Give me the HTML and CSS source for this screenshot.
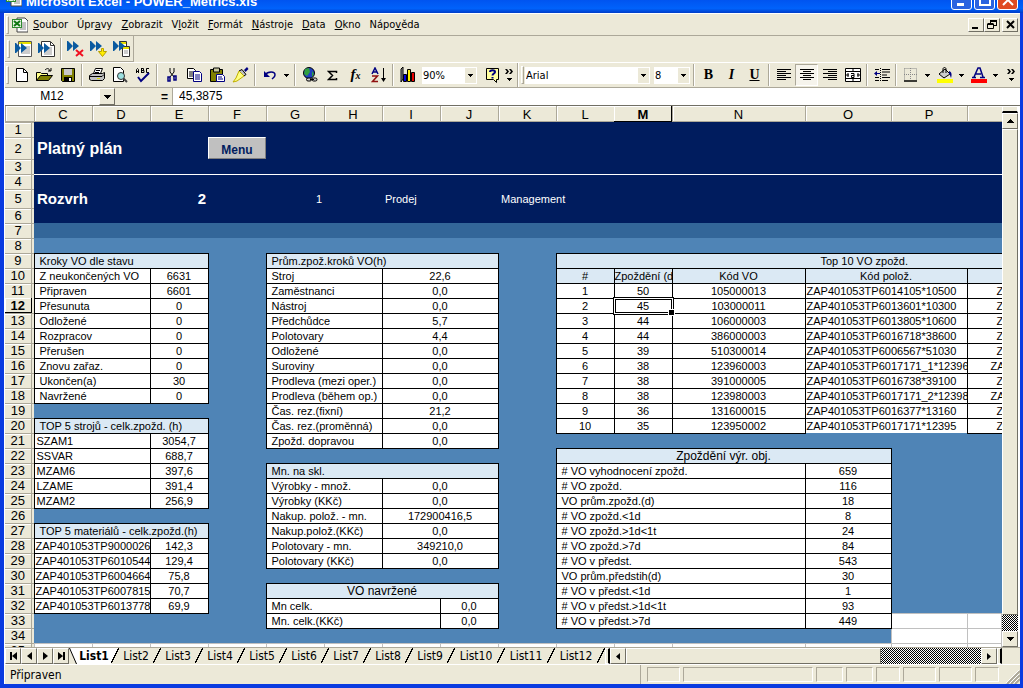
FILE: index.html
```html
<!DOCTYPE html>
<html lang="cs">
<head>
<meta charset="utf-8">
<title>Microsoft Excel - POWER_Metrics.xls</title>
<link rel="stylesheet" href="styles.css">
</head>
<body>
<svg class="defs" width="0" height="0" aria-hidden="true">
  <symbol id="ff" viewBox="0 0 12 10"><path d="M1 0v10l5-5v5l6-5-6-5v5z" fill="#0a5aa0"/><path d="M0 0h1v10H0z" fill="#0a5aa0"/></symbol>
  <symbol id="down" viewBox="0 0 5 3"><path d="M0 0h5v1H0zM1 1h3v1H1zM2 2h1v1H2z"/></symbol>
  <symbol id="slash" viewBox="0 0 8 16"><path d="M7 0h1v2H7v2H6v2H5v2H4v2H3v2H2v2H1v1H0v-2h1v-2h1V9h1V7h1V5h1V3h1V1h1z"/></symbol>
  <symbol id="more" viewBox="0 0 9 12"><path d="M0 0h2l2 2.500-2 2.500H0l2-2.500zM4 0h2l2 2.500-2 2.500H4l2-2.500zM2 9h5v1H2zM3 10h3v1H3zM4 11h1v1H4z"/></symbol>
  <symbol id="excel" viewBox="0 0 16 16"><path d="M5 1h8l3 3v11H5z" fill="#fff" stroke="#444"/><path d="M10 6h4M10 8h4M10 10h4M8 12h6" stroke="#888"/><path d="M0 2h10v9H0z" fill="#2e8b2e"/><path d="M1 3h8v7H1z" fill="#e8f4e4"/><path d="M2 4l6 5M8 4l-6 5" stroke="#117711" stroke-width="2"/></symbol>
</svg>

<header class="titlebar">
  <svg class="app-icon" width="16" height="16"><use href="#excel"/></svg>
  <h1 class="title">Microsoft Excel - POWER_Metrics.xls</h1>
  <div class="caption-buttons">
    <button class="cap" aria-label="Minimalizovat"><svg width="20" height="20"><path d="M5 13h7v3H5z" fill="#fff"/></svg></button>
    <button class="cap" aria-label="Maximalizovat"><svg width="20" height="20"><path d="M5 5h10v10H5z" fill="none" stroke="#fff" stroke-width="2"/></svg></button>
    <button class="cap cap-close" aria-label="Zavřít"><svg width="20" height="20"><path d="M5 5l10 10M15 5L5 15" stroke="#fff" stroke-width="2"/></svg></button>
  </div>
</header>

<main class="client">
  <nav class="menubar">
    <span class="grip"></span>
    <svg class="doc-icon" width="16" height="16"><use href="#excel"/></svg>
    <button><u>S</u>oubor</button><button>Úpr<u>a</u>vy</button><button><u>Z</u>obrazit</button><button>V<u>l</u>ožit</button><button><u>F</u>ormát</button><button><u>N</u>ástroje</button><button><u>D</u>ata</button><button><u>O</u>kno</button><button>Nápo<u>v</u>ěda</button>
    <div class="mdi">
      <button aria-label="Minimalizovat sešit"><svg width="11" height="9"><path d="M1 7h6v2H1z"/></svg></button>
      <button aria-label="Obnovit sešit"><svg width="11" height="9"><path d="M3 .500h7M3 1.500h7M9.500 1v5M3.500 1v2M.500 3.500h6M.500 4.500h6M.500 4v4.500h6V4M7 5.500h3" fill="none" stroke="#000"/></svg></button>
      <button aria-label="Zavřít sešit"><svg width="11" height="9"><path d="M2 1l7 7M9 1L2 8" stroke="#000" stroke-width="2"/></svg></button>
    </div>
  </nav>

  <div class="toolbar custom">
    <div class="custom-group">
      <span class="grip"></span>
      <button class="tool" aria-label="List zpět"><svg width="17" height="16"><path d="M3.500.500h13v15h-13z" fill="#fff" stroke="#555"/><path d="M4 1h12v2H4z" fill="#e8e000"/><path d="M6 6h9M6 8h9M6 10h9M6 12h9" stroke="#999"/><use href="#ff" width="12" height="10" y="2"/></svg></button>
      <button class="tool" aria-label="List vpřed"><svg width="17" height="16"><path d="M3.500.500h9l4 4v11h-13z" fill="#fff" stroke="#333"/><path d="M12.500 1v3.500h4" fill="none" stroke="#333"/><path d="M6 7h8M6 9h8M6 11h8M6 13h8" stroke="#999"/><use href="#ff" width="12" height="10" y="2"/></svg></button>
      <span class="sep"></span>
      <button class="tool" aria-label="Odebrat"><svg width="17" height="16"><use href="#ff" width="12" height="10"/><path d="M9 9l7 6M16 9l-7 6" stroke="#f01020" stroke-width="2"/></svg></button>
      <button class="tool" aria-label="Uložit dolů"><svg width="17" height="16"><use href="#ff" width="12" height="10"/><path d="M11.500 7.500v3h-3l4 5 4-5h-3v-3z" fill="#ffee00" stroke="#b8a000"/></svg></button>
      <button class="tool" aria-label="Kopírovat listy"><svg width="17" height="16"><path d="M6.500.500h7v7h-7z" fill="#fff" stroke="#333"/><path d="M7 1h6v2H7z" fill="#e8e000"/><path d="M9.500 5.500h7v10h-7z" fill="#fff" stroke="#333"/><path d="M10 6h6v2h-6z" fill="#e8e000"/><path d="M11 10h4M11 12h4" stroke="#999"/><use href="#ff" width="12" height="10"/></svg></button>
    </div>
  </div>

  <div class="toolbar">
    <span class="grip"></span>
    <button class="tool" aria-label="Nový"><svg width="16" height="16"><path d="M2.500 1.500h7l4 4v9h-11z" fill="#fff" stroke="#000"/><path d="M9.500 2v3.500h4" fill="none" stroke="#000"/></svg></button>
    <button class="tool" aria-label="Otevřít"><svg width="17" height="16"><path d="M.500 13.500v-8h4l1 1h6v3" fill="#ff8" stroke="#000"/><path d="M.500 13.500l4-5h12l-4 5z" fill="#808000" stroke="#000"/><path d="M9 3c2-2 4-2 5 1M12 4h3V1" fill="none" stroke="#000"/></svg></button>
    <button class="tool" aria-label="Uložit"><svg width="16" height="16"><path d="M1.500 1.500h13v13h-12l-1-1z" fill="#808000" stroke="#000"/><path d="M4 2h8v6H4z" fill="#c8c8c8"/><path d="M4 10h8v4H4z"/><path d="M9 11h2v3H9z" fill="#fff"/></svg></button>
    <span class="sep"></span>
    <button class="tool" aria-label="Tisk"><svg width="16" height="16"><path d="M4.500 6.500l2-5h7l-2 5z" fill="#fff" stroke="#000"/><path d="M7 3.500h4M6 5.500h4" stroke="#000"/><path d="M.500 8.500l3-2h10l2-1v6l-2 2h-11l-2-1z" fill="#c0c0c0" stroke="#000"/><path d="M1 9.500h12l2-2M3 13.500h9" stroke="#000" fill="none"/><path d="M8 11h3v1H8z" fill="#dd0"/></svg></button>
    <button class="tool" aria-label="Náhled"><svg width="16" height="16"><path d="M1.500.500h7l3 3v11h-10z" fill="#fff" stroke="#000"/><circle cx="9" cy="9" r="3.500" fill="#9ce0e0" stroke="#333"/><path d="M11.500 11.500l3.500 3.500" stroke="#444" stroke-width="2"/></svg></button>
    <button class="tool" aria-label="Pravopis"><svg width="16" height="16"><path d="M1.500 6V2.500l1-1 1 1V6M1 4.500h3M6.500 1v4.500M6 1.500h2.500v2H6.500h2.500v2H6M14 1.500h-2.500v4H14" fill="none" stroke="#000"/><path d="M3 10l3 4 8-8" fill="none" stroke="#000080" stroke-width="2"/></svg></button>
    <span class="sep"></span>
    <button class="tool" aria-label="Vyjmout"><svg width="16" height="16"><path d="M6 1v4l4 5M10 1v4l-4 5" fill="none" stroke="#000"/><path d="M4 10h2v4H4zM10 9h2v4h-2z" fill="none" stroke="#000080" stroke-width="1.500"/></svg></button>
    <button class="tool" aria-label="Kopírovat"><svg width="17" height="16"><path d="M1.500 1.500h6l2 2v8h-8z" fill="#fff" stroke="#000"/><path d="M3 5h4M3 7h4M3 9h4" stroke="#000"/><path d="M7.500 4.500h6l2 2v8h-8z" fill="#fff" stroke="#000080"/><path d="M9 8h5M9 10h5M9 12h5" stroke="#000080"/></svg></button>
    <button class="tool" aria-label="Vložit"><svg width="17" height="16"><path d="M1.500 2.500h12v12h-12z" fill="#808000" stroke="#000"/><path d="M4.500 1h6v4h-6z" fill="#c8c8a0" stroke="#000"/><path d="M7.500 7.500h6l2 2v5h-8z" fill="#fff" stroke="#000080"/><path d="M9 10h4M9 12h5" stroke="#000080"/></svg></button>
    <button class="tool" aria-label="Kopírovat formát"><svg width="17" height="16"><path d="M12 3l3-3 1.500 2-3 3z" fill="#000080"/><path d="M7 4l3-1.500 4 5L12 9z" fill="#c0c0c0" stroke="#000"/><path d="M7 4l5 5-7 5-4 1 3-4z" fill="#ffff80" stroke="#c0b000"/></svg></button>
    <span class="sep"></span>
    <button class="tool" aria-label="Zpět"><svg width="16" height="16"><path d="M3 8c3-4 10-4 10 0 0 2-2 3-3 4" fill="none" stroke="#000080" stroke-width="1.500"/><path d="M2 4v6h6z" fill="#000080"/></svg></button>
    <button class="drop" aria-label="Zpět - možnosti"><svg width="5" height="3"><use href="#down"/></svg></button>
    <span class="sep"></span>
    <button class="tool" aria-label="Hypertextový odkaz"><svg width="16" height="16"><circle cx="7" cy="6" r="5.500" fill="#2040c0" stroke="#000"/><path d="M3 2l4-1 1 4-3 4-3-2zM10 4l2 3-2 3z" fill="#30a040"/><rect x="4.500" y="11" width="5" height="3" rx="1.500" fill="#ccc" stroke="#000"/><rect x="10" y="11" width="5" height="3" rx="1.500" fill="#ccc" stroke="#000"/><path d="M8 12.500h4" stroke="#000"/></svg></button>
    <button class="tool" aria-label="Automatické shrnutí"><svg width="11" height="11"><path d="M9.500 3V1.500h-8l4 4-4 4h8V8" fill="none" stroke="#000" stroke-width="1.500"/></svg></button>
    <button class="tool fx" aria-label="Vložit funkci">f<small>x</small></button>
    <button class="tool" aria-label="Seřadit vzestupně"><svg width="16" height="16"><path d="M1 7l3-6 3 6M2 5h4" fill="none" stroke="#000080" stroke-width="1.500"/><path d="M1 9h5.500L1.500 14.500H7" fill="none" stroke="#901010" stroke-width="1.500"/><path d="M12 1h1v10h2l-2.500 4L10 11h2z"/></svg></button>
    <span class="sep"></span>
    <button class="tool" aria-label="Průvodce grafem"><svg width="16" height="16"><path d="M1 2l2-2v12l-2 3z" fill="#999" stroke="#000"/><path d="M3.500 7.500h3v7h-3z" fill="#0000e0" stroke="#000"/><path d="M7.500 2.500h3v12h-3z" fill="#ffee00" stroke="#000"/><path d="M11.500 5.500h3v9h-3z" fill="#e80000" stroke="#000"/></svg></button>
    <span class="combo combo-zoom"><select aria-label="Lupa"><option>90%</option></select><svg width="5" height="3"><use href="#down"/></svg></span>
    <button class="tool" aria-label="Nápověda"><svg width="16" height="16"><path d="M2.500 1.500h12v11h-2v3l-3-3h-7z" fill="#ffffa0" stroke="#000"/><path d="M6 5c0-2.500 5-2.500 5 0 0 1.500-2.500 1.500-2.500 3.500M8.500 10v1.500" fill="none" stroke="#000080" stroke-width="2"/></svg></button>
    <button class="drop more" aria-label="Další tlačítka"><svg width="9" height="12"><use href="#more"/></svg></button>
    <span class="edge"></span>
    <span class="grip"></span>
    <span class="combo combo-font"><select aria-label="Písmo"><option>Arial</option></select><svg width="5" height="3"><use href="#down"/></svg></span>
    <span class="combo combo-size"><select aria-label="Velikost písma"><option>8</option></select><svg width="5" height="3"><use href="#down"/></svg></span>
    <span class="sep"></span>
    <button class="tool letter"><b>B</b></button>
    <button class="tool letter"><i>I</i></button>
    <button class="tool letter"><u>U</u></button>
    <span class="sep"></span>
    <button class="tool" aria-label="Zarovnat vlevo"><svg width="14" height="12"><path d="M0 .500h14M0 2.500h9M0 4.500h14M0 6.500h9M0 8.500h14M0 10.500h9" stroke="#000"/></svg></button>
    <button class="tool pressed" aria-label="Na střed"><svg width="14" height="12"><path d="M0 .500h14M3 2.500h8M0 4.500h14M3 6.500h8M0 8.500h14M3 10.500h8" stroke="#000"/></svg></button>
    <button class="tool" aria-label="Zarovnat vpravo"><svg width="14" height="12"><path d="M0 .500h14M5 2.500h9M0 4.500h14M5 6.500h9M0 8.500h14M5 10.500h9" stroke="#000"/></svg></button>
    <button class="tool" aria-label="Sloučit a zarovnat"><svg width="16" height="16"><path d="M.500 1.500h15v13H.500zM0 4.500h16M0 11.500h16M8 1v3M8 12v3" fill="#fff" stroke="#000"/><path d="M1 8h3M3 6v4M12 8h3M13 6v4M6 6.500h3v4H6.500v-2H9" fill="none" stroke="#000"/></svg></button>
    <span class="sep"></span>
    <button class="tool" aria-label="Zmenšit odsazení"><svg width="16" height="14"><path d="M1 1.500h4M8 1.500h8M8 4h8M8 7h5M1 9.500h4M8 9.500h8M1 12.500h4M8 12.500h6" stroke="#000"/><path d="M6.500 0v14" stroke="#000" stroke-dasharray="1 1"/><path d="M0 5.500L3 3v5zM3 5h3v1H3z" fill="#000080"/></svg></button>
    <span class="sep"></span>
    <button class="tool" aria-label="Ohraničení"><svg width="14" height="14"><path d="M.500.500h12v12M.500.500v12M6.500 0v12M0 6.500h13" fill="none" stroke="#888" stroke-dasharray="1 1"/><path d="M0 13h13" stroke="#000" stroke-width="1.500"/></svg></button>
    <button class="drop" aria-label="Ohraničení - možnosti"><svg width="5" height="3"><use href="#down"/></svg></button>
    <button class="tool" aria-label="Barva výplně"><svg width="16" height="16"><path d="M2 7l6-5 5 5-6 4z" fill="#ccc" stroke="#000"/><path d="M6 6V2c0-2 3-2 3 0v4" fill="none" stroke="#000"/><path d="M12 4c3 1 3 4 2 7-1-2-1-4-2-4z" fill="#000080"/><path d="M0 12h16v4H0z" fill="#ff0"/></svg></button>
    <button class="drop" aria-label="Barva výplně - možnosti"><svg width="5" height="3"><use href="#down"/></svg></button>
    <button class="tool" aria-label="Barva písma"><svg width="16" height="16"><path d="M3 10l4-9h2l3 9M5 7h5M1 10.500h4M9 10.500h5" fill="none" stroke="#000080" stroke-width="1.500"/><path d="M0 12h16v4H0z" fill="#f00"/></svg></button>
    <button class="drop" aria-label="Barva písma - možnosti"><svg width="5" height="3"><use href="#down"/></svg></button>
    <button class="drop more last" aria-label="Další formáty"><svg width="9" height="12"><use href="#more"/></svg></button>
  </div>

  <div class="formula">
    <input class="name-box" aria-label="Pole názvů" value="M12">
    <button class="name-drop" aria-label="Seznam názvů"><svg width="7" height="4"><path d="M0 0h7v1H0zM1 1h5v1H1zM2 2h3v1H2zM3 3h1v1H3z"/></svg></button>
    <button class="equals">=</button>
    <input class="entry" aria-label="Řádek vzorců" value="45,3875">
  </div>

  <div class="sheet">
    <div class="viewport">
      <table class="grid">
        <colgroup><col class="w-head"><col class="w"><col class="w"><col class="w"><col class="w"><col class="w"><col class="w"><col class="w"><col class="w"><col class="w"><col class="w"><col class="w"><col class="w-n"><col class="w-o"><col class="w-p"><col></colgroup>
        <thead><tr><th></th><th>C</th><th>D</th><th>E</th><th>F</th><th>G</th><th>H</th><th>I</th><th>J</th><th>K</th><th>L</th><th class="on">M</th><th>N</th><th>O</th><th>P</th><th></th></tr></thead>
        <tbody>
          <tr class="navy"><th>1</th><td colspan="15"></td></tr>
          <tr class="navy tall"><th>2</th><td colspan="3" class="plan">Platný plán</td><td class="menu-cell"><button class="menu-button">Menu</button></td><td colspan="11"></td></tr>
          <tr class="navy"><th>3</th><td colspan="15"></td></tr>
          <tr class="navy rule"><th>4</th><td colspan="15"></td></tr>
          <tr class="navy mid"><th>5</th><td colspan="2" class="sched">Rozvrh</td><td class="sched end">2</td><td></td><td class="end">1</td><td></td><td colspan="2">Prodej</td><td colspan="2">Management</td><td colspan="5"></td></tr>
          <tr class="navy"><th>6</th><td colspan="15"></td></tr>
          <tr class="steel"><th>7</th><td colspan="15"></td></tr>
          <tr><th>8</th><td colspan="15"></td></tr>
          <tr><th>9</th><td colspan="3" class="h">Kroky VO dle stavu</td><td></td><td colspan="4" class="h">Prům.zpož.kroků VO(h)</td><td></td><td colspan="6" class="h top10">Top 10 VO zpožd.</td></tr>
          <tr><th>10</th><td colspan="2" class="l">Z neukončených VO</td><td class="v">6631</td><td></td><td colspan="2" class="l">Stroj</td><td colspan="2" class="v">22,6</td><td></td><td class="h c">#</td><td class="h cut">Zpoždění (d</td><td class="h c">Kód VO</td><td colspan="2" class="h c">Kód polož.</td><td class="h last-head"></td></tr>
          <tr><th>11</th><td colspan="2" class="l">Připraven</td><td class="v">6601</td><td></td><td colspan="2" class="l">Zaměstnanci</td><td colspan="2" class="v">0,0</td><td></td><td class="v">1</td><td class="v">50</td><td class="v">105000013</td><td colspan="2" class="k">ZAP401053TP6014105*10500</td><td class="q">Z</td></tr>
          <tr><th class="on">12</th><td colspan="2" class="l">Přesunuta</td><td class="v">0</td><td></td><td colspan="2" class="l">Nástroj</td><td colspan="2" class="v">0,0</td><td></td><td class="v">2</td><td class="v active">45</td><td class="v">103000011</td><td colspan="2" class="k">ZAP401053TP6013601*10300</td><td class="q">Z</td></tr>
          <tr><th>13</th><td colspan="2" class="l">Odložené</td><td class="v">0</td><td></td><td colspan="2" class="l">Předchůdce</td><td colspan="2" class="v">5,7</td><td></td><td class="v">3</td><td class="v">44</td><td class="v">106000003</td><td colspan="2" class="k">ZAP401053TP6013805*10600</td><td class="q">Z</td></tr>
          <tr><th>14</th><td colspan="2" class="l">Rozpracov</td><td class="v">0</td><td></td><td colspan="2" class="l">Polotovary</td><td colspan="2" class="v">4,4</td><td></td><td class="v">4</td><td class="v">44</td><td class="v">386000003</td><td colspan="2" class="k">ZAP401053TP6016718*38600</td><td class="q">Z</td></tr>
          <tr><th>15</th><td colspan="2" class="l">Přerušen</td><td class="v">0</td><td></td><td colspan="2" class="l">Odložené</td><td colspan="2" class="v">0,0</td><td></td><td class="v">5</td><td class="v">39</td><td class="v">510300014</td><td colspan="2" class="k">ZAP401053TP6006567*51030</td><td class="q">Z</td></tr>
          <tr><th>16</th><td colspan="2" class="l">Znovu zařaz.</td><td class="v">0</td><td></td><td colspan="2" class="l">Suroviny</td><td colspan="2" class="v">0,0</td><td></td><td class="v">6</td><td class="v">38</td><td class="v">123960003</td><td colspan="2" class="k">ZAP401053TP6017171_1*12396</td><td class="q q-long">ZA</td></tr>
          <tr><th>17</th><td colspan="2" class="l">Ukončen(a)</td><td class="v">30</td><td></td><td colspan="2" class="l">Prodleva (mezi oper.)</td><td colspan="2" class="v">0,0</td><td></td><td class="v">7</td><td class="v">38</td><td class="v">391000005</td><td colspan="2" class="k">ZAP401053TP6016738*39100</td><td class="q">Z</td></tr>
          <tr><th>18</th><td colspan="2" class="l">Navržené</td><td class="v">0</td><td></td><td colspan="2" class="l">Prodleva (během op.)</td><td colspan="2" class="v">0,0</td><td></td><td class="v">8</td><td class="v">38</td><td class="v">123980003</td><td colspan="2" class="k">ZAP401053TP6017171_2*12398</td><td class="q q-long">ZA</td></tr>
          <tr><th>19</th><td colspan="4"></td><td colspan="2" class="l">Čas. rez.(fixní)</td><td colspan="2" class="v">21,2</td><td></td><td class="v">9</td><td class="v">36</td><td class="v">131600015</td><td colspan="2" class="k">ZAP401053TP6016377*13160</td><td class="q">Z</td></tr>
          <tr><th>20</th><td colspan="3" class="h">TOP 5 strojů - celk.zpožd. (h)</td><td></td><td colspan="2" class="l">Čas. rez.(proměnná)</td><td colspan="2" class="v">0,0</td><td></td><td class="v">10</td><td class="v">35</td><td class="v">123950002</td><td colspan="2" class="k open">ZAP401053TP6017171*12395</td><td class="q">Z</td></tr>
          <tr><th>21</th><td colspan="2" class="k name">SZAM1</td><td class="v">3054,7</td><td></td><td colspan="2" class="l">Zpožd. dopravou</td><td colspan="2" class="v">0,0</td><td colspan="7"></td></tr>
          <tr><th>22</th><td colspan="2" class="k name">SSVAR</td><td class="v">688,7</td><td colspan="6"></td><td colspan="4" class="h big">Zpoždění výr. obj.</td><td colspan="2"></td></tr>
          <tr><th>23</th><td colspan="2" class="k name">MZAM6</td><td class="v">397,6</td><td></td><td colspan="4" class="h">Mn. na skl.</td><td></td><td colspan="3" class="l"># VO vyhodnocení zpožd.</td><td class="v">659</td><td colspan="2"></td></tr>
          <tr><th>24</th><td colspan="2" class="k name">LZAME</td><td class="v">391,4</td><td></td><td colspan="2" class="l">Výrobky - množ.</td><td colspan="2" class="v">0,0</td><td></td><td colspan="3" class="l"># VO zpožd.</td><td class="v">116</td><td colspan="2"></td></tr>
          <tr><th>25</th><td colspan="2" class="k name">MZAM2</td><td class="v">256,9</td><td></td><td colspan="2" class="l">Výrobky (KKč)</td><td colspan="2" class="v">0,0</td><td></td><td colspan="3" class="l">VO prům.zpožd.(d)</td><td class="v">18</td><td colspan="2"></td></tr>
          <tr><th>26</th><td colspan="4"></td><td colspan="2" class="l">Nakup. polož. - mn.</td><td colspan="2" class="v">172900416,5</td><td></td><td colspan="3" class="l"># VO zpožd.&lt;1d</td><td class="v">8</td><td colspan="2"></td></tr>
          <tr><th>27</th><td colspan="3" class="h">TOP 5 materiálů - celk.zpožd.(h)</td><td></td><td colspan="2" class="l">Nakup.polož.(KKč)</td><td colspan="2" class="v">0,0</td><td></td><td colspan="3" class="l"># VO zpožd.&gt;1d&lt;1t</td><td class="v">24</td><td colspan="2"></td></tr>
          <tr><th>28</th><td colspan="2" class="k">ZAP401053TP9000026*</td><td class="v">142,3</td><td></td><td colspan="2" class="l">Polotovary - mn.</td><td colspan="2" class="v">349210,0</td><td></td><td colspan="3" class="l"># VO zpožd.&gt;7d</td><td class="v">84</td><td colspan="2"></td></tr>
          <tr><th>29</th><td colspan="2" class="k">ZAP401053TP6010544*</td><td class="v">129,4</td><td></td><td colspan="2" class="l">Polotovary (KKč)</td><td colspan="2" class="v">0,0</td><td></td><td colspan="3" class="l"># VO v předst.</td><td class="v">543</td><td colspan="2"></td></tr>
          <tr><th>30</th><td colspan="2" class="k">ZAP401053TP6004664*</td><td class="v">75,8</td><td colspan="6"></td><td colspan="3" class="l">VO prům.předstih(d)</td><td class="v">30</td><td colspan="2"></td></tr>
          <tr><th>31</th><td colspan="2" class="k">ZAP401053TP6007815*</td><td class="v">70,7</td><td></td><td colspan="4" class="h big">VO navržené</td><td></td><td colspan="3" class="l"># VO v předst.&lt;1d</td><td class="v">1</td><td colspan="2"></td></tr>
          <tr><th>32</th><td colspan="2" class="k">ZAP401053TP6013778*</td><td class="v">69,9</td><td></td><td colspan="3" class="l">Mn celk.</td><td class="v">0,0</td><td></td><td colspan="3" class="l"># VO v předst.&gt;1d&lt;1t</td><td class="v">93</td><td colspan="2"></td></tr>
          <tr><th>33</th><td colspan="4"></td><td colspan="3" class="l">Mn. celk.(KKč)</td><td class="v">0,0</td><td></td><td colspan="3" class="l"># VO v předst.&gt;7d</td><td class="v">449</td><td class="e"></td><td class="e"></td></tr>
          <tr><th>34</th><td colspan="13"></td><td class="e"></td><td class="e"></td></tr>
          <tr><th>35</th><td class="e"></td><td class="e"></td><td class="e"></td><td class="e"></td><td class="e"></td><td class="e"></td><td class="e"></td><td class="e"></td><td class="e"></td><td class="e"></td><td class="e"></td><td class="e"></td><td class="e"></td><td class="e"></td><td class="e"></td></tr>
        </tbody>
      </table>
    </div>
    <div class="vscroll">
      <span class="split-h"></span>
      <button class="arrow" aria-label="Nahoru"><svg width="7" height="4"><path d="M3 0h1v1H3zM2 1h3v1H2zM1 2h5v1H1zM0 3h7v1H0z"/></svg></button>
      <span class="thumb"></span>
      <span class="dither"></span>
      <button class="arrow" aria-label="Dolů"><svg width="7" height="4"><path d="M0 0h7v1H0zM1 1h5v1H1zM2 2h3v1H2zM3 3h1v1H3z"/></svg></button>
    </div>
  </div>

  <div class="tabbar">
    <button class="arrow" aria-label="První list"><svg width="7" height="8"><path d="M0 0h2v8H0zM7 0v8L2 4z"/></svg></button>
    <button class="arrow" aria-label="Předchozí list"><svg width="5" height="8"><path d="M5 0v8L0 4z"/></svg></button>
    <button class="arrow" aria-label="Další list"><svg width="5" height="8"><path d="M0 0v8l5-4z"/></svg></button>
    <button class="arrow" aria-label="Poslední list"><svg width="7" height="8"><path d="M5 0h2v8H5zM0 0v8l5-4z"/></svg></button>
    <svg class="first-edge" width="8" height="16"><path d="M0 0h8v16z" fill="#fff"/><path d="M.500 0l7 16" stroke="#000"/></svg>
    <button class="tab current">List1</button><svg class="slash" width="8" height="16"><path d="M0 0h8L0 16z" fill="#fff"/><use href="#slash"/></svg>
    <button class="tab">List2</button><svg class="slash" width="8" height="16"><use href="#slash"/></svg>
    <button class="tab">List3</button><svg class="slash" width="8" height="16"><use href="#slash"/></svg>
    <button class="tab">List4</button><svg class="slash" width="8" height="16"><use href="#slash"/></svg>
    <button class="tab">List5</button><svg class="slash" width="8" height="16"><use href="#slash"/></svg>
    <button class="tab">List6</button><svg class="slash" width="8" height="16"><use href="#slash"/></svg>
    <button class="tab">List7</button><svg class="slash" width="8" height="16"><use href="#slash"/></svg>
    <button class="tab">List8</button><svg class="slash" width="8" height="16"><use href="#slash"/></svg>
    <button class="tab">List9</button><svg class="slash" width="8" height="16"><use href="#slash"/></svg>
    <button class="tab wide">List10</button><svg class="slash" width="8" height="16"><use href="#slash"/></svg>
    <button class="tab wide">List11</button><svg class="slash" width="8" height="16"><use href="#slash"/></svg>
    <button class="tab wide">List12</button><svg class="slash" width="8" height="16"><use href="#slash"/></svg>
    <span class="split-v"></span>
    <button class="arrow" aria-label="Doleva"><svg width="4" height="7"><path d="M4 0v7L0 3.500z"/></svg></button>
    <span class="thumb"></span>
    <span class="dither"></span>
    <button class="arrow" aria-label="Doprava"><svg width="4" height="7"><path d="M0 0v7l4-3.500z"/></svg></button>
    <span class="split-v"></span>
    <span class="corner"></span>
  </div>

  <footer class="status">
    <span class="message">Připraven</span>
    <span class="panel p33"></span><span class="panel p130"></span><span class="panel p27"></span><span class="panel p27"></span><span class="panel p24"></span><span class="panel p33"></span><span class="panel p33"></span><span class="panel p24"></span>
    <svg class="size-grip" width="14" height="14"><path d="M1 14L14 1M5 14l9-9M9 14l5-5" stroke="#aca899" stroke-width="2"/><path d="M0 13L13 0M4 13l9-9M8 13l5-5" stroke="#fff"/></svg>
  </footer>
</main>
</body>
</html>
```
FILE: styles.css
```css
* { box-sizing: border-box; }

:root {
  --face: #ece9d8;
  --shade: #aca899;
  --navy: #001c5e;
  --blue: #4f84b6;
  --ui: "DejaVu Sans Condensed", "DejaVu Sans", sans-serif;
  --cell: "Liberation Sans", Arial, sans-serif;
}

body {
  margin: 0;
  height: 100vh;
  display: flex;
  flex-direction: column;
  overflow: hidden;
  background: #0a3be0;
  font: 11px var(--ui);
  color: #000;
}

.defs { position: absolute; }

button {
  margin: 0;
  padding: 0;
  border: 0;
  background: none;
  font: inherit;
  color: inherit;
}

svg { display: block; flex: none; }

/* Title bar */
.titlebar {
  flex: none;
  height: 13px;
  padding: 0 5px 0 6px;
  display: flex;
  align-items: flex-end;
  gap: 4px;
  overflow: hidden;
  background: linear-gradient(#0054f0, #0062fb 65%, #003dc8);
}
.app-icon { margin-bottom: 6px; }
.title {
  flex: 1;
  margin: 0 0 4px;
  font: bold 13px/14px var(--cell);
  color: #fff;
  white-space: nowrap;
}
.caption-buttons { display: flex; gap: 2px; margin-bottom: 3px; }
.cap {
  width: 21px;
  height: 21px;
  border: 1px solid #fff;
  border-radius: 3px;
  background: #2a63e0;
}
.cap-close { background: #e04a20; }

/* Client area */
.client {
  flex: 1;
  min-height: 0;
  margin: 0 3px 4px 4px;
  display: flex;
  flex-direction: column;
  border-left: 1px solid #fff;
  background: var(--face);
}

.grip {
  flex: none;
  width: 3px;
  height: 18px;
  margin: 0 1px;
  border: 1px solid;
  border-color: #fff var(--shade) var(--shade) #fff;
}

.menubar {
  flex: none;
  height: 23px;
  display: flex;
  align-items: center;
  gap: 9px;
  padding-right: 2px;
  border-top: 1px solid #fff;
  border-bottom: 1px solid var(--shade);
}
.doc-icon { margin: 0 -4px 0 -7px; }
.mdi { margin-left: auto; display: flex; }
.mdi button {
  width: 16px;
  height: 14px;
  display: grid;
  place-items: center;
  border: 1px solid;
  border-color: #fff #716f64 #716f64 #fff;
}
.mdi button:last-child { margin-left: 2px; }

.toolbar {
  flex: none;
  height: 26px;
  display: flex;
  align-items: center;
  border-top: 1px solid #fff;
  border-bottom: 1px solid var(--shade);
}
.toolbar.custom { border: 0; }
.custom-group {
  height: 26px;
  display: flex;
  align-items: center;
  border-right: 1px solid var(--shade);
  border-bottom: 1px solid var(--shade);
}
.custom .grip { margin: 0 2px; }
.tool {
  flex: none;
  width: 23px;
  height: 22px;
  display: grid;
  place-items: center;
}
.pressed {
  border: 1px solid;
  border-color: var(--shade) #fff #fff var(--shade);
  background: #f6f4ec;
}
.sep {
  flex: none;
  width: 2px;
  height: 22px;
  margin: 0 2px;
  border-left: 1px solid var(--shade);
  border-right: 1px solid #fff;
}
.edge { flex: none; width: 2px; height: 24px; margin: 0 1px 0 2px; border-left: 1px solid var(--shade); border-right: 1px solid #fff; }
.drop { flex: none; width: 11px; height: 22px; display: grid; place-items: center; }
.more { width: 12px; }
.last { margin-left: auto; margin-right: 3px; }
.letter { font: bold 14px "Liberation Serif", serif; }
.fx { display: block; font: italic bold 15px/20px "Liberation Serif", serif; }
.fx small { font-size: 10px; }

.combo { flex: none; position: relative; height: 17px; background: #fff; }
.combo select {
  width: 100%;
  height: 17px;
  padding: 0 14px 0 1px;
  border: 0;
  background: #fff;
  font: 11px var(--ui);
  color: #000;
  appearance: none;
}
.combo svg {
  position: absolute;
  top: 1px;
  right: 1px;
  width: 11px;
  height: 15px;
  padding: 6px 3px;
  background: var(--face);
  pointer-events: none;
}
.combo-zoom { width: 55px; margin: 0 3px; }
.combo-font { width: 125px; }
.combo-size { width: 36px; margin: 0 1px 0 4px; }

/* Formula bar */
.formula {
  flex: none;
  height: 17px;
  display: flex;
  font: 12px var(--cell);
}
.formula input {
  min-width: 0;
  padding: 0;
  border: 0;
  background: #fff;
  font: 12px/17px var(--cell);
  color: #000;
}
.name-box { width: 94px; text-align: center; }
.name-drop {
  width: 16px;
  display: grid;
  place-items: center;
  border: 1px solid;
  border-color: #fff #716f64 #716f64 #fff;
}
.equals { width: 58px; padding-right: 4px; text-align: right; font-weight: bold; border-right: 1px solid var(--shade); }
.formula .entry { flex: 1; padding-left: 6px; }

/* Worksheet */
.sheet { flex: 1; min-height: 0; display: flex; border-top: 1px solid #716f64; }
.viewport { flex: 1; min-width: 0; overflow: hidden; background: #fff; }

.grid {
  width: 100%;
  table-layout: fixed;
  border-collapse: collapse;
  background: var(--blue);
  font: 11px/13px var(--cell);
}
.w-head { width: 29px; }
.w { width: 58px; }
.w-n { width: 133px; }
.w-o { width: 86px; }
.w-p { width: 76px; }

.grid tr { height: 15px; }
.grid thead tr { height: 16px; }
.grid .tall { height: 22px; }
.grid .mid { height: 19px; }

.grid th {
  padding: 0;
  background: var(--face);
  font-size: 13px;
  font-weight: normal;
  box-shadow: inset 0 1px var(--shade), inset -2px 0 var(--face), inset -3px 0 var(--shade), inset 0 2px #fff;
}
.grid thead th { line-height: 15px; box-shadow: inset 0 -1px var(--shade), inset 1px 0 var(--shade), inset 2px 0 #fff, inset 0 1px #fff; }
.grid tbody th { padding-right: 3px; line-height: 13px; }
.grid thead th.on { font-weight: bold; box-shadow: inset -1px -1px #000, inset 1px 1px #fff; }
.grid tbody th.on { font-weight: bold; box-shadow: inset -2px 0 var(--face), inset -3px -1px #000, inset 1px 1px #fff; }

.grid td {
  padding: 1px 2px 0 3px;
  overflow: hidden;
  white-space: nowrap;
  background: var(--blue);
}
.grid .navy td { background: var(--navy); color: #fff; }
.grid .steel td { background: #336699; }
.grid .rule td { border-top: 1px solid #fff; }
.grid .plan { font-size: 16px; line-height: 20px; font-weight: bold; }
.grid .sched { padding-top: 0; font-size: 15px; line-height: 17px; font-weight: bold; }
.grid .end { text-align: right; }
.grid .menu-cell { padding: 0; }
.menu-button {
  display: block;
  width: 100%;
  height: 22px;
  padding-top: 3px;
  border: 1px solid;
  border-color: #fff #808080 #808080 #fff;
  background: #c0c0c0;
  font: bold 12px var(--cell);
  color: var(--navy);
}

.grid .h, .grid .l, .grid .v, .grid .k, .grid .q { border: 1px solid #000; background: #fff; }
.grid .h { padding-left: 5px; background: #dbe9f4; }
.grid .l { padding-left: 5px; }
.grid .v, .grid .c { padding-left: 2px; text-align: center; }
.grid .k { padding-left: 1px; padding-right: 0; }
.grid .name { padding-left: 2px; }
.grid .open { border-bottom: 0; }
.grid .cut { padding: 1px 0 0; }
.grid .q { padding-left: 29px; padding-right: 0; border-right: 0; }
.grid .q-long { padding-left: 23px; }
.grid .last-head { border-right: 0; }
.grid .top10 { padding-left: 264px; border-right: 0; }
.grid .big { padding: 1px 0 0; font-size: 12px; text-align: center; }
.grid .e { border: 1px solid #c0c0c0; background: #fff; }

.grid .active { position: relative; overflow: visible; }
.active::before {
  content: "";
  position: absolute;
  inset: -2px;
  border: 1px solid #000;
  box-shadow: inset 0 0 0 1px #fff, inset 0 0 0 2px #000;
}
.active::after {
  content: "";
  position: absolute;
  right: -3px;
  bottom: -3px;
  width: 5px;
  height: 5px;
  border: 1px solid #fff;
  background: #000;
}

/* Scroll bars */
.arrow, .thumb {
  flex: none;
  border: 1px solid;
  border-color: #fff #716f64 #716f64 #fff;
  background: var(--face);
}
.arrow { width: 16px; height: 16px; display: grid; place-items: center; }
.dither { flex: none; background: repeating-conic-gradient(#000 0 25%, #fff 0 50%) 0 0 / 2px 2px; }

.vscroll { flex: none; width: 18px; display: flex; flex-direction: column; border-right: 2px solid #fff; }
.split-h { height: 7px; border: 1px solid #fff; border-bottom: 2px solid #000; }
.vscroll .thumb { flex: 1; }
.vscroll .dither { height: 16px; }

.tabbar { flex: none; height: 17px; display: flex; border-top: 1px solid var(--shade); }
.tab { flex: none; width: 34px; font-size: 12px; line-height: 15px; text-align: center; }
.current { background: #fff; font-weight: bold; }
.wide { width: 42px; }
.split-v { flex: none; width: 5px; border: 1px solid #fff; border-right: 2px solid #000; }
.tabbar .thumb { flex: 1; }
.tabbar .dither { width: 100px; }
.corner { width: 18px; }

/* Status bar */
.status {
  flex: none;
  height: 20px;
  display: flex;
  align-items: center;
  gap: 3px;
  border-top: 1px solid #fff;
}
.message { flex: 1; align-self: stretch; padding-left: 5px; margin-right: 3px; border-right: 1px solid var(--shade); font-size: 12px; line-height: 20px; }
.panel { height: 15px; border: 1px solid; border-color: var(--shade) #fff #fff var(--shade); }
.p33 { width: 33px; }
.p130 { width: 130px; }
.p27 { width: 27px; }
.p24 { width: 24px; }
.size-grip { align-self: flex-end; margin-left: 4px; }
```
